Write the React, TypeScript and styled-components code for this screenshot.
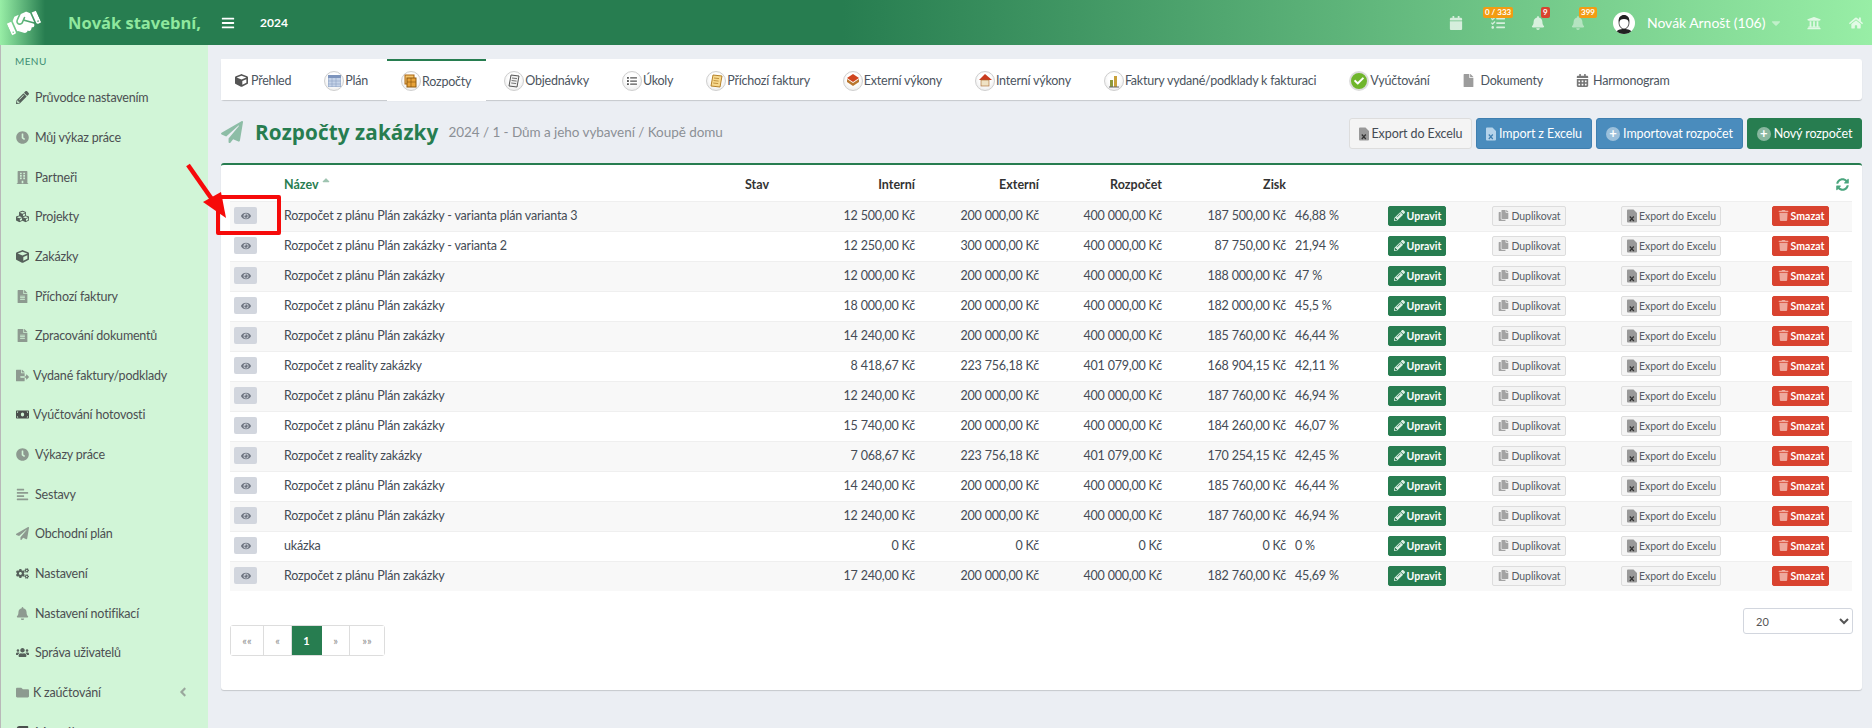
import React from 'react';
import styled, { createGlobalStyle } from 'styled-components';
import {
  FaBars, FaBuilding, FaCalendarAlt, FaCalendar, FaBell, FaCaretDown, FaUniversity, FaHome, FaPencilAlt, FaClock, FaCubes, FaCube,
  FaFileAlt, FaFileExport, FaMoneyBill, FaAlignLeft, FaPaperPlane, FaCogs, FaUsers, FaFolder, FaAngleLeft, FaBook, FaEye, FaCopy,
  FaTrash, FaSyncAlt, FaHandshake, FaTasks, FaFile, FaSortUp, FaCheck, FaList,
} from 'react-icons/fa';

const GREEN = '#277d50';
const TEXT = '#444b55';

const Global = createGlobalStyle`
  html, body { margin: 0; padding: 0; height: 100%; overflow: hidden; }
  body { font-family: Lato, "Open Sans", sans-serif; font-size: 13px; color: ${TEXT}; background: #ebeef3; }
  * { box-sizing: border-box; }
`;

const Page = styled.div`
  position: relative;
  width: 1872px;
  height: 728px;
  overflow: hidden;
  display: flex;
  flex-direction: column;
`;

/* header */
const TopBar = styled.header`
  flex: none;
  height: 45px;
  display: flex;
  align-items: center;
  color: #fff;
  background: linear-gradient(90deg, ${GREEN} 0%, ${GREEN} 45%, #98eea6 100%);
`;
const Logo = styled.div`
  width: 45px;
  height: 45px;
  display: flex;
  align-items: center;
  justify-content: center;
  padding-left: 3px;
  font-size: 32px;
  background: linear-gradient(90deg, #98eea6 0%, ${GREEN} 100%);
  svg { transform: rotate(-24deg); }
`;
const Brand = styled.div`
  width: 176px;
  padding-left: 23px;
  font-family: "Open Sans", sans-serif;
  font-weight: 700;
  font-size: 16.5px;
  color: #8fe89e;
  white-space: nowrap;
`;
const Burger = styled.div`
  width: 39px;
  display: flex;
  padding-top: 1px;
  font-size: 14px;
`;
const Year = styled.div`
  font-weight: 700;
  font-size: 12px;
`;
const TopRight = styled.div`
  margin-left: auto;
  display: flex;
  align-items: center;
  height: 100%;
`;
const TopIcon = styled.div<{ $w: number; $dim?: boolean }>`
  position: relative;
  width: ${p => p.$w}px;
  display: flex;
  justify-content: center;
  font-size: 14px;
  color: ${p => (p.$dim ? 'rgba(255, 255, 255, 0.45)' : 'rgba(255, 255, 255, 0.72)')};
`;
const Badge = styled.span<{ $red?: boolean; $left: number }>`
  position: absolute;
  top: -9px;
  left: ${p => p.$left}px;
  height: 11px;
  padding: 0 2px;
  border-radius: 2px;
  font-size: 8px;
  line-height: 11px;
  font-weight: 700;
  color: #fff;
  white-space: nowrap;
  background: ${p => (p.$red ? '#d9432f' : '#f39c12')};
`;
const Avatar = styled.div`
  width: 22px;
  height: 22px;
  margin-left: 14px;
  border-radius: 50%;
  background: #fff;
  overflow: hidden;
  display: flex;
`;
const UserName = styled.div`
  width: 133px;
  padding-left: 12px;
  font-size: 14px;
  letter-spacing: -0.05px;
  color: #fff;
  white-space: nowrap;
`;

/* shell */
const Body = styled.div`
  flex: 1;
  display: flex;
  min-height: 0;
`;
const Sidebar = styled.nav`
  flex: none;
  width: 208px;
  border-left: 1px solid #b9b9b9;
  background: #d1f5d7;
  padding: 10px 0 0 14px;
  overflow: hidden;
`;
const MenuLabel = styled.div`
  font-size: 10px;
  letter-spacing: 0.4px;
  color: #3f8f73;
  height: 13px;
  line-height: 13px;
  margin-bottom: 15px;
`;
const MenuItem = styled.div<{ $tight?: boolean }>`
  height: 39.65px;
  margin-top: -5px;
  margin-bottom: 5px;
  display: flex;
  align-items: center;
  gap: ${p => (p.$tight ? 3 : 5)}px;
  font-size: 12.5px;
  letter-spacing: -0.2px;
  color: #4c4f52;
  white-space: nowrap;
  padding-right: 12px;
`;
const MenuIcon = styled.span`
  width: 15px;
  display: flex;
  justify-content: center;
  font-size: 13px;
  color: #8d9a90;
`;
const MenuChevron = styled.span`
  margin-left: auto;
  margin-right: 6px;
  display: flex;
  color: #9aa79d;
  font-size: 14px;
`;
const Main = styled.main`
  flex: 1;
  padding: 14px 10px 0 13px;
  min-width: 0;
`;

/* tabs */
const Tabs = styled.div`
  height: 41px;
  display: flex;
  gap: 4px;
  background: #fff;
  border-radius: 3px;
  box-shadow: 0 1px 1px rgba(0, 0, 0, 0.16);
`;
const Tab = styled.div<{ $active?: boolean }>`
  display: flex;
  align-items: center;
  gap: 1px;
  padding: 0 15px 0 14px;
  font-size: 12.5px;
  letter-spacing: -0.22px;
  color: #4c5560;
  white-space: nowrap;
  background: #fff;
  border-top: 2px solid ${p => (p.$active ? GREEN : 'transparent')};
  height: ${p => (p.$active ? '42px' : '41px')};
`;
const RoundIcon = styled.span`
  width: 20px;
  height: 20px;
  flex: none;
  border-radius: 50%;
  border: 1px solid #cfcfcf;
  background: radial-gradient(circle at 50% 40%, #fff 40%, #e4e4e4 100%);
  display: flex;
  align-items: center;
  justify-content: center;
  font-size: 10px;
`;
const PlainTabIcon = styled.span<{ $gap?: number }>`
  display: flex;
  font-size: 13px;
  color: #9c9c9c;
  margin-right: ${p => p.$gap ?? 0}px;
`;

/* title row */
const TitleRow = styled.div`
  height: 63px;
  display: flex;
  align-items: center;
`;
const TitleIcon = styled.span`
  display: flex;
  font-size: 22px;
  color: #8dbda6;
  margin-right: 12px;
`;
const Title = styled.h1`
  margin: 0;
  font-family: "Open Sans", sans-serif;
  font-size: 20.7px;
  font-weight: 700;
  letter-spacing: 0.1px;
  color: ${GREEN};
  white-space: nowrap;
`;
const Crumb = styled.span`
  margin-left: 10px;
  font-size: 13.5px;
  letter-spacing: -0.05px;
  color: #8b9096;
  white-space: nowrap;
`;
const Actions = styled.div`
  margin-left: auto;
  margin-top: 4px;
  display: flex;
  gap: 4px;
`;
const ToolButton = styled.div<{ $kind: 'plain' | 'blue' | 'green'; $w: number }>`
  width: ${p => p.$w}px;
  height: 31px;
  display: flex;
  align-items: center;
  justify-content: center;
  gap: 3px;
  border-radius: 3px;
  font-size: 12.5px;
  letter-spacing: -0.1px;
  white-space: nowrap;
  color: ${p => (p.$kind === 'plain' ? TEXT : '#fff')};
  border: 1px solid ${p => (p.$kind === 'plain' ? '#ddd' : p.$kind === 'blue' ? '#3f7fb0' : GREEN)};
  background: ${p => (p.$kind === 'plain' ? '#f4f4f4' : p.$kind === 'blue' ? '#4a8cbd' : GREEN)};
`;
const PlusDot = styled.span`
  width: 14px;
  height: 14px;
  border-radius: 50%;
  background: rgba(255, 255, 255, 0.45);
  color: #fff;
  font-size: 13px;
  font-weight: 700;
  line-height: 13px;
  text-align: center;
`;

/* table card */
const Card = styled.section`
  height: 527px;
  background: #fff;
  border-top: 2px solid ${GREEN};
  border-radius: 3px;
  box-shadow: 0 1px 1px rgba(0, 0, 0, 0.16);
  padding: 0 9px;
  position: relative;
`;
const Table = styled.table`
  width: 1622px;
  table-layout: fixed;
  border-collapse: collapse;
`;
const HeadCell = styled.th<{ $right?: boolean }>`
  height: 36px;
  padding: 4px 0 0;
  font-size: 12.5px;
  font-weight: 700;
  color: ${p => (p.$right ? '#333' : GREEN)};
  text-align: ${p => (p.$right ? 'right' : 'left')};
`;
const HeadPlain = styled(HeadCell)`
  color: #333;
`;
const SortMark = styled.span`
  display: inline-block;
  margin-left: 1px;
  font-size: 12px;
  color: #9fc4b1;
`;
const Row = styled.tr<{ $odd: boolean }>`
  height: 30px;
  border-top: 1px solid #efefef;
  background: ${p => (p.$odd ? '#f8f8f8' : '#fff')};
`;
const Cell = styled.td<{ $right?: boolean; $center?: boolean }>`
  padding: 0 0 1px;
  font-size: 12.5px;
  letter-spacing: -0.19px;
  color: ${TEXT};
  white-space: nowrap;
  text-align: ${p => (p.$right ? 'right' : p.$center ? 'center' : 'left')};
`;
const PercentCell = styled(Cell)`
  padding-left: 9px;
`;
const EyeButton = styled.span`
  margin-left: 4px;
  width: 23px;
  height: 17px;
  border-radius: 2px;
  background: #d2d6de;
  color: #6d7480;
  font-size: 10px;
  display: flex;
  align-items: center;
  justify-content: center;
`;
const RowButton = styled.span<{ $kind: 'edit' | 'plain' | 'danger' }>`
  display: inline-flex;
  align-items: center;
  justify-content: center;
  gap: 2px;
  height: 20px;
  padding: 0 4px 0 5px;
  border-radius: 2px;
  font-size: 10.5px;
  letter-spacing: ${p => (p.$kind === 'plain' ? '-0.05px' : '0')};
  font-weight: ${p => (p.$kind === 'plain' ? 400 : 700)};
  vertical-align: middle;
  color: ${p => (p.$kind === 'plain' ? '#565c64' : '#fff')};
  border: 1px solid ${p => (p.$kind === 'edit' ? GREEN : p.$kind === 'danger' ? '#d9432f' : '#ddd')};
  background: ${p => (p.$kind === 'edit' ? GREEN : p.$kind === 'danger' ? '#d9432f' : '#f4f4f4')};
`;
const BtnIcon = styled.span<{ $c: string }>`
  display: flex;
  font-size: 11px;
  color: ${p => p.$c};
`;
const RefreshIcon = styled.span`
  display: flex;
  justify-content: flex-end;
  padding-right: 3px;
  font-size: 13px;
  color: #4aa57e;
`;
const Foot = styled.div`
  display: flex;
  justify-content: space-between;
  align-items: flex-start;
  padding-top: 17px;
`;
const Pager = styled.div`
  display: flex;
  height: 31px;
  margin-top: 17px;
  border: 1px solid #ddd;
  border-radius: 3px;
`;
const PageCell = styled.div<{ $w: number; $active?: boolean }>`
  width: ${p => p.$w}px;
  display: flex;
  align-items: center;
  justify-content: center;
  font-size: 11px;
  color: ${p => (p.$active ? '#fff' : '#8f8f8f')};
  font-weight: ${p => (p.$active ? 700 : 400)};
  background: ${p => (p.$active ? GREEN : '#fff')};
  border-right: 1px solid ${p => (p.$active ? GREEN : '#ddd')};
  &:last-child { border-right: 0; }
`;
const PageSize = styled.select`
  width: 110px;
  height: 26px;
  border: 1px solid #d2d6de;
  border-radius: 3px;
  background: #fff;
  color: #555;
  font-family: Lato, sans-serif;
  font-size: 11px;
  padding-left: 8px;
`;

/* annotation painted over the screenshot */
const Marker = styled.div`
  position: absolute;
  left: 216px;
  top: 195px;
  width: 65px;
  height: 40px;
  border: 4px solid #f60a0a;
  border-radius: 2px;
`;
const Arrow = styled.svg`
  position: absolute;
  left: 180px;
  top: 155px;
  width: 60px;
  height: 75px;
`;

const menu = [
  { icon: <FaPencilAlt style={{ color: '#55605a' }} />, label: 'Průvodce nastavením' },
  { icon: <FaClock />, label: 'Můj výkaz práce' },
  { icon: <FaBuilding />, label: 'Partneři' },
  { icon: <FaCubes style={{ color: '#55605a' }} />, label: 'Projekty' },
  { icon: <FaCube style={{ color: '#55605a' }} />, label: 'Zakázky' },
  { icon: <FaFileAlt />, label: 'Příchozí faktury' },
  { icon: <FaFileAlt />, label: 'Zpracování dokumentů' },
  { icon: <FaFileExport />, label: 'Vydané faktury/podklady', tight: true },
  { icon: <FaMoneyBill style={{ color: '#4a4f4c' }} />, label: 'Vyúčtování hotovosti', tight: true },
  { icon: <FaClock />, label: 'Výkazy práce' },
  { icon: <FaAlignLeft />, label: 'Sestavy' },
  { icon: <FaPaperPlane />, label: 'Obchodní plán' },
  { icon: <FaCogs style={{ color: '#55605a' }} />, label: 'Nastavení' },
  { icon: <FaBell />, label: 'Nastavení notifikací' },
  { icon: <FaUsers style={{ color: '#55605a' }} />, label: 'Správa uživatelů' },
  { icon: <FaFolder />, label: 'K zaúčtování', tight: true, chevron: true },
  { icon: <FaBook style={{ color: '#4a4f4c' }} />, label: 'Manuály' },
];

const rows = [
  ['Rozpočet z plánu Plán zakázky - varianta plán varianta 3', '12 500,00 Kč', '200 000,00 Kč', '400 000,00 Kč', '187 500,00 Kč', '46,88 %'],
  ['Rozpočet z plánu Plán zakázky - varianta 2', '12 250,00 Kč', '300 000,00 Kč', '400 000,00 Kč', '87 750,00 Kč', '21,94 %'],
  ['Rozpočet z plánu Plán zakázky', '12 000,00 Kč', '200 000,00 Kč', '400 000,00 Kč', '188 000,00 Kč', '47 %'],
  ['Rozpočet z plánu Plán zakázky', '18 000,00 Kč', '200 000,00 Kč', '400 000,00 Kč', '182 000,00 Kč', '45,5 %'],
  ['Rozpočet z plánu Plán zakázky', '14 240,00 Kč', '200 000,00 Kč', '400 000,00 Kč', '185 760,00 Kč', '46,44 %'],
  ['Rozpočet z reality zakázky', '8 418,67 Kč', '223 756,18 Kč', '401 079,00 Kč', '168 904,15 Kč', '42,11 %'],
  ['Rozpočet z plánu Plán zakázky', '12 240,00 Kč', '200 000,00 Kč', '400 000,00 Kč', '187 760,00 Kč', '46,94 %'],
  ['Rozpočet z plánu Plán zakázky', '15 740,00 Kč', '200 000,00 Kč', '400 000,00 Kč', '184 260,00 Kč', '46,07 %'],
  ['Rozpočet z reality zakázky', '7 068,67 Kč', '223 756,18 Kč', '401 079,00 Kč', '170 254,15 Kč', '42,45 %'],
  ['Rozpočet z plánu Plán zakázky', '14 240,00 Kč', '200 000,00 Kč', '400 000,00 Kč', '185 760,00 Kč', '46,44 %'],
  ['Rozpočet z plánu Plán zakázky', '12 240,00 Kč', '200 000,00 Kč', '400 000,00 Kč', '187 760,00 Kč', '46,94 %'],
  ['ukázka', '0 Kč', '0 Kč', '0 Kč', '0 Kč', '0 %'],
  ['Rozpočet z plánu Plán zakázky', '17 240,00 Kč', '200 000,00 Kč', '400 000,00 Kč', '182 760,00 Kč', '45,69 %'],
];

const columns = [54, 461, 60, 110, 124, 123, 124, 83, 96, 128, 156, 103];

// small sheet with an x, the excel export icon
const ExcelIcon = ({ c, x }: { c: string; x: string }) => (
  <svg width="10" height="14" viewBox="0 0 10 14">
    <path d="M0 1.5A1 1 0 0 1 1 .5h5.5L10 4v8.5a1 1 0 0 1-1 1H1a1 1 0 0 1-1-1z" fill={c} />
    <path d="M2.8 7.5l4 4.5M6.8 7.5l-4 4.5" stroke={x} strokeWidth="1.2" />
  </svg>
);

const tabIcons = {
  plan: (
    <svg width="13" height="12" viewBox="0 0 13 12">
      <rect width="13" height="12" fill="#c5d3e8" stroke="#8ea3c4" />
      <rect width="13" height="3" fill="#7e95bd" />
      <path d="M4 3v9M8 3v9M0 6h13M0 9h13" stroke="#8ea3c4" strokeWidth=".6" />
    </svg>
  ),
  budget: (
    <svg width="14" height="14" viewBox="0 0 14 14">
      <rect x="1" y="1" width="9" height="9" fill="#f4c46c" stroke="#a9650f" />
      <rect x="3" y="4" width="9" height="9" fill="#e8a33a" stroke="#8f5a10" />
      <path d="M3 8h9M7 4v9" stroke="#8f5a10" strokeWidth=".7" />
    </svg>
  ),
  order: (
    <svg width="13" height="14" viewBox="0 0 13 14">
      <path d="M3 1l8 1-2 11-8-1z" fill="#f1f1f1" stroke="#555" />
      <path d="M4 4l5 .6M3.6 6.5l5 .6M3.2 9l5 .6" stroke="#555" strokeWidth=".8" />
    </svg>
  ),
  invoice: (
    <svg width="13" height="14" viewBox="0 0 13 14">
      <path d="M3 1l9 1-2 11-9-1z" fill="#f7d98e" stroke="#b5822a" />
      <path d="M4 4l5 .6M3.6 6.5l5 .6M3.2 9l5 .6" stroke="#b5822a" strokeWidth=".8" />
    </svg>
  ),
  externalWork: (
    <svg width="14" height="13" viewBox="0 0 14 13">
      <path d="M7 0l6 4-6 4-6-4z" fill="#d0451f" />
      <path d="M1 5l6 4 6-4v3l-6 4-6-4z" fill="#b9772f" />
    </svg>
  ),
  internalWork: (
    <svg width="14" height="13" viewBox="0 0 14 13">
      <path d="M7 0l7 6H1z" fill="#c93a1d" />
      <rect x="3" y="6" width="8" height="6" fill="#efe2c4" stroke="#a5642a" strokeWidth=".6" />
    </svg>
  ),
  issued: (
    <svg width="12" height="14" viewBox="0 0 12 14">
      <rect x="2" y="6" width="3" height="7" fill="#8e9a3d" />
      <rect x="6" y="2" width="3" height="11" fill="#c9a13b" />
      <path d="M1 13h10" stroke="#666" />
    </svg>
  ),
};

const Face = () => (
  <svg width="22" height="22" viewBox="0 0 22 22">
    <path d="M6 10c0-4 2-6 5-6s5 2 5 6c0 4-2 7-5 7s-5-3-5-7z" fill="#fff" stroke="#222" strokeWidth=".8" />
    <path d="M6 10c-1-5 2-7 5-7s6 2 5 7c-1-2-2-3-5-3s-4 1-5 3z" fill="#222" />
    <path d="M2 22c1-4 5-5 9-5s8 1 9 5z" fill="#222" />
  </svg>
);

export default function App() {
  return (
    <Page>
      <Global />
      <TopBar>
        <Logo><FaHandshake /></Logo>
        <Brand>Novák stavební,</Brand>
        <Burger><FaBars /></Burger>
        <Year>2024</Year>
        <TopRight>
          <TopIcon $w={42}><FaCalendar /></TopIcon>
          <TopIcon $w={42}><FaTasks /><Badge $left={6}>0 / 333</Badge></TopIcon>
          <TopIcon $w={38}><FaBell /><Badge $red $left={22}>9</Badge></TopIcon>
          <TopIcon $w={42} $dim><FaBell /><Badge $left={22}>399</Badge></TopIcon>
          <Avatar><Face /></Avatar>
          <UserName>Novák Arnošt (106)</UserName>
          <TopIcon $w={16} $dim><FaCaretDown /></TopIcon>
          <TopIcon $w={60}><FaUniversity /></TopIcon>
          <TopIcon $w={24}><FaHome /></TopIcon>
          <TopIcon $w={4} />
        </TopRight>
      </TopBar>
      <Body>
        <Sidebar>
          <MenuLabel>MENU</MenuLabel>
          {menu.map(m => (
            <MenuItem key={m.label} $tight={m.tight}>
              <MenuIcon>{m.icon}</MenuIcon>
              {m.label}
              {m.chevron && <MenuChevron><FaAngleLeft /></MenuChevron>}
            </MenuItem>
          ))}
        </Sidebar>
        <Main>
          <Tabs>
            <Tab><PlainTabIcon $gap={2} style={{ color: '#555' }}><FaCube /></PlainTabIcon>Přehled</Tab>
            <Tab><RoundIcon>{tabIcons.plan}</RoundIcon>Plán</Tab>
            <Tab $active><RoundIcon>{tabIcons.budget}</RoundIcon>Rozpočty</Tab>
            <Tab><RoundIcon>{tabIcons.order}</RoundIcon>Objednávky</Tab>
            <Tab><RoundIcon><FaList color="#555" /></RoundIcon>Úkoly</Tab>
            <Tab><RoundIcon>{tabIcons.invoice}</RoundIcon>Příchozí faktury</Tab>
            <Tab><RoundIcon>{tabIcons.externalWork}</RoundIcon>Externí výkony</Tab>
            <Tab><RoundIcon>{tabIcons.internalWork}</RoundIcon>Interní výkony</Tab>
            <Tab><RoundIcon>{tabIcons.issued}</RoundIcon>Faktury vydané/podklady k fakturaci</Tab>
            <Tab><RoundIcon style={{ background: '#6fb52c', color: '#fff', border: '2px solid #dcdcdc' }}><FaCheck /></RoundIcon>Vyúčtování</Tab>
            <Tab><PlainTabIcon $gap={4}><FaFile /></PlainTabIcon>Dokumenty</Tab>
            <Tab><PlainTabIcon $gap={3} style={{ color: '#777' }}><FaCalendarAlt /></PlainTabIcon>Harmonogram</Tab>
          </Tabs>
          <TitleRow>
            <TitleIcon><FaPaperPlane /></TitleIcon>
            <Title>Rozpočty zakázky</Title>
            <Crumb>2024 / 1 - Dům a jeho vybavení / Koupě domu</Crumb>
            <Actions>
              <ToolButton $kind="plain" $w={123}><ExcelIcon c="#999" x="#333" />Export do Excelu</ToolButton>
              <ToolButton $kind="blue" $w={116}><ExcelIcon c="#b5d3ea" x="#3f7fb0" />Import z Excelu</ToolButton>
              <ToolButton $kind="blue" $w={147}><PlusDot>+</PlusDot>Importovat rozpočet</ToolButton>
              <ToolButton $kind="green" $w={115}><PlusDot>+</PlusDot>Nový rozpočet</ToolButton>
            </Actions>
          </TitleRow>
          <Card>
            <Table>
              <colgroup>
                {columns.map((w, i) => <col key={i} width={w} />)}
              </colgroup>
              <thead>
                <tr>
                  <HeadCell />
                  <HeadCell>Název<SortMark><FaSortUp /></SortMark></HeadCell>
                  <HeadPlain>Stav</HeadPlain>
                  <HeadCell $right>Interní</HeadCell>
                  <HeadCell $right>Externí</HeadCell>
                  <HeadCell $right>Rozpočet</HeadCell>
                  <HeadCell $right>Zisk</HeadCell>
                  <HeadCell />
                  <HeadCell />
                  <HeadCell />
                  <HeadCell />
                  <HeadCell><RefreshIcon><FaSyncAlt /></RefreshIcon></HeadCell>
                </tr>
              </thead>
              <tbody>
                {rows.map((r, i) => (
                  <Row key={i} $odd={i % 2 === 0}>
                    <Cell><EyeButton><FaEye /></EyeButton></Cell>
                    <Cell colSpan={2}>{r[0]}</Cell>
                    <Cell $right>{r[1]}</Cell>
                    <Cell $right>{r[2]}</Cell>
                    <Cell $right>{r[3]}</Cell>
                    <Cell $right>{r[4]}</Cell>
                    <PercentCell>{r[5]}</PercentCell>
                    <Cell $center><RowButton $kind="edit"><BtnIcon $c="#dcefe4"><FaPencilAlt /></BtnIcon>Upravit</RowButton></Cell>
                    <Cell $center><RowButton $kind="plain"><BtnIcon $c="#a3a3a3"><FaCopy /></BtnIcon>Duplikovat</RowButton></Cell>
                    <Cell $center><RowButton $kind="plain"><ExcelIcon c="#999" x="#333" />Export do Excelu</RowButton></Cell>
                    <Cell $center><RowButton $kind="danger"><BtnIcon $c="#eea79c"><FaTrash /></BtnIcon>Smazat</RowButton></Cell>
                  </Row>
                ))}
              </tbody>
            </Table>
            <Foot>
              <Pager>
                <PageCell $w={33}>««</PageCell>
                <PageCell $w={28}>«</PageCell>
                <PageCell $w={30} $active>1</PageCell>
                <PageCell $w={28}>»</PageCell>
                <PageCell $w={34}>»»</PageCell>
              </Pager>
              <PageSize defaultValue="20">
                <option>20</option>
                <option>50</option>
                <option>100</option>
              </PageSize>
            </Foot>
          </Card>
        </Main>
      </Body>
      <Marker />
      <Arrow viewBox="0 0 60 75">
        <path d="M8 10L36 50" stroke="#f60a0a" strokeWidth="4.5" fill="none" />
        <path d="M46 63L23 47L41 37z" fill="#f60a0a" />
      </Arrow>
    </Page>
  );
}
